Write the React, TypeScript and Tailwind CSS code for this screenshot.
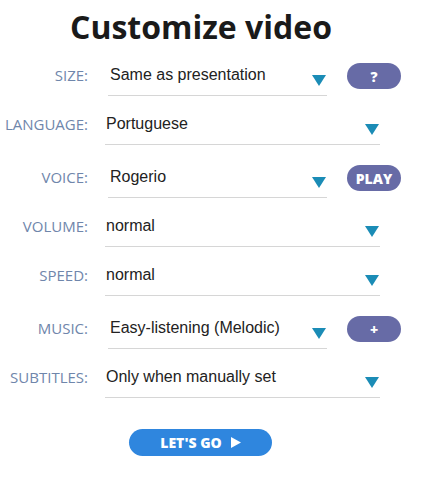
import React from "react";

type Row = { label: string; value: string; button?: string };

const rows: Row[] = [
  { label: "SIZE:", value: "Same as presentation", button: "?" },
  { label: "LANGUAGE:", value: "Portuguese" },
  { label: "VOICE:", value: "Rogerio", button: "PLAY" },
  { label: "VOLUME:", value: "normal" },
  { label: "SPEED:", value: "normal" },
  { label: "MUSIC:", value: "Easy-listening (Melodic)", button: "+" },
  { label: "SUBTITLES:", value: "Only when manually set" },
];

function Arrow() {
  return (
    <svg width="14" height="11" viewBox="0 0 14 11" className="absolute right-[1px] top-[10px]">
      <path d="M0 0 H14 L7 11 Z" fill="#1b8cb6" />
    </svg>
  );
}

function FieldRow({ row, first }: { row: Row; first: boolean }) {
  const short = !!row.button;
  return (
    <div className={`flex items-start ${first ? "mt-[18px]" : short ? "mt-[22px]" : "mt-[18px]"}`}>
      <div className="w-[88px] text-right text-[15px] font-normal leading-[20px] text-[#6f86ab] font-['Open_Sans',sans-serif]">
        {row.label}
      </div>
      {short ? (
        <div className="relative ml-[20px] w-[219px] border-b border-[#d6d6d6] pb-[10px] pl-[2px] text-[16px] leading-[20px] text-[#222]">
          {row.value}
          <Arrow />
        </div>
      ) : (
        <div className="relative ml-[17px] w-[275px] border-b border-[#d6d6d6] pb-[10px] pl-[1px] text-[16px] leading-[20px] text-[#222]">
          {row.value}
          <Arrow />
        </div>
      )}
      {row.button && (
        <button className="ml-[20px] -mt-[2px] flex h-[26px] w-[54px] items-center justify-center rounded-full bg-[#676ba6] text-[14px] font-extrabold text-white font-['Open_Sans',sans-serif]">
          {row.button}
        </button>
      )}
    </div>
  );
}

export default function App() {
  return (
    <div className="h-[486px] w-[426px] overflow-hidden bg-white font-['Liberation_Sans',Arial,sans-serif]">
      <h1 className="pt-[7px] pr-[24px] text-center text-[32px] font-bold leading-[40px] text-[#1a1a1a] font-['Open_Sans',sans-serif]">
        Customize video
      </h1>
      {rows.map((row, i) => (
        <FieldRow key={row.label} row={row} first={i === 0} />
      ))}
      <button className="ml-[129px] mt-[31px] flex h-[27px] w-[143px] items-center justify-center gap-[9px] rounded-full bg-[#2f86de] text-[14px] font-extrabold text-white font-['Open_Sans',sans-serif]">
        LET'S GO
        <svg width="10" height="11" viewBox="0 0 10 11">
          <path d="M0 0 L10 5.5 L0 11 Z" fill="white" />
        </svg>
      </button>
    </div>
  );
}
